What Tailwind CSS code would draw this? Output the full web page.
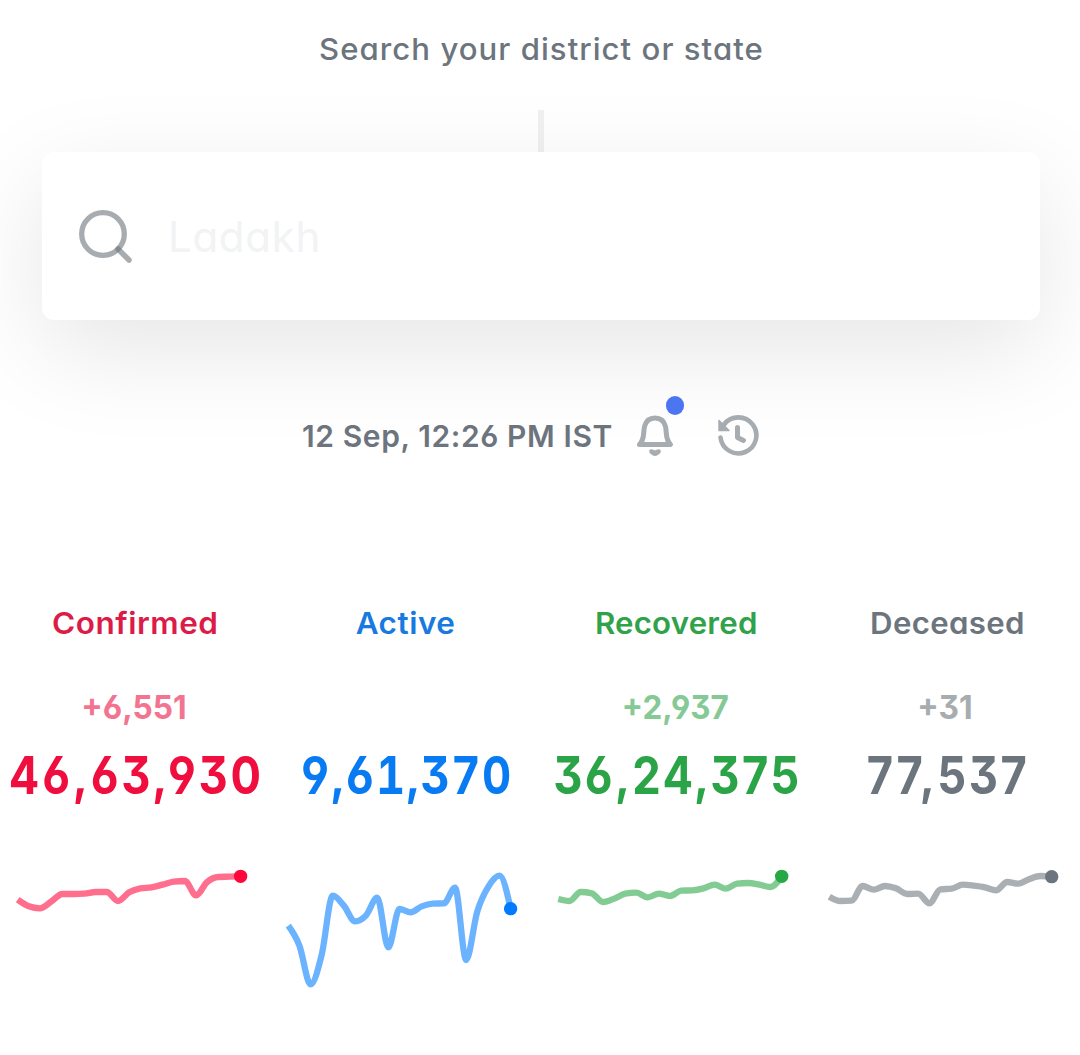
<!DOCTYPE html>
<html lang="en">
<head>
<meta charset="utf-8">
<title>Covid tracker</title>
<script src="https://cdn.jsdelivr.net/npm/@tailwindcss/browser@4"></script>
</head>
<body class="bg-white text-[#6c757d] font-['Inter',sans-serif] overflow-x-hidden [font-feature-settings:'cv11','cv09','cv03','cv04']">
<main class="w-[1080px] h-[1055px] flex flex-col items-center overflow-hidden">
  <label class="mt-[27px] h-11 leading-11 pl-[3px] text-[30px] font-medium tracking-[1px] scale-x-[1.037] whitespace-nowrap">Search your district or state</label>
  <div class="mt-[39px] ml-[2px] w-[6px] h-[42px] bg-[#f1f1f1]"></div>
  <div class="w-[998px] h-[168px] ml-[2px] rounded-xl bg-white shadow-[0_30px_100px_rgba(0,0,0,0.1)] flex items-center pl-[36px]">
    <svg class="w-[56px] h-[56px]" viewBox="0 0 56 56" fill="none" stroke="#6c757d" stroke-opacity=".6" stroke-linecap="round">
      <circle cx="25" cy="26" r="21.3" stroke-width="5.300"/>
      <path d="M40 41L51 52" stroke-width="5.500"/>
    </svg>
    <span class="ml-[34px] pt-[2px] text-[42px] leading-none tracking-[0.7px] text-[#f1f3f4]">Ladakh</span>
  </div>
  <div class="mt-[74px] h-[84px] w-full flex items-center pl-[302px]">
    <span class="w-[310px] pt-px text-[30px] font-semibold tracking-[0.6px] whitespace-nowrap">12 Sep, 12:26 PM IST</span>
    <div class="relative ml-[24px] w-[40px] h-[42px]">
      <svg class="w-[40px] h-[42px]" viewBox="0 0 40 42" fill="none" stroke="#a7acb1" stroke-width="5" stroke-linejoin="round" stroke-linecap="round">
        <path d="M3.500 29.500C9 24 7 18 8.500 11.500C10 5.500 14 3 19 3C24 3 28 5.500 29.500 11.500C31 18 29 24 34.500 29.500Z"/>
        <path d="M14.500 35.500C15.500 34.500 17 36 19 36.500C21 36 22.500 34.500 23.500 35.500C25 37 21 40 19 40C17 40 13 37 14.500 35.500Z" fill="#a7acb1" stroke-width="2"/>
      </svg>
      <i class="absolute left-[30px] -top-[19px] w-[18px] h-[19px] rounded-full bg-[#4c75f2]"></i>
    </div>
    <svg class="ml-[41px] w-[44px] h-[42px]" viewBox="0 0 44 42" fill="none" stroke="#a7acb1" stroke-width="4.600" stroke-linecap="round" stroke-linejoin="round">
      <path d="M3.500 22.500A18 18 0 1 0 7 9.500"/>
      <path d="M2 5.500V15.500H12Z" fill="#a7acb1" stroke-width="1.500"/>
      <path d="M20.500 12.500V22.500L26.500 25.500" stroke-width="5"/>
    </svg>
  </div>
  <section class="mt-[111px] w-full grid grid-cols-4 text-center whitespace-nowrap">
    <article class="flex flex-col items-center text-[#ff073a]">
      <h5 class="h-[68px] leading-[68px] text-[30px] font-semibold scale-x-[1.05] tracking-[0.5px] text-[#dc1c48]">Confirmed</h5>
      <h4 class="mt-[16px] h-[68px] leading-[68px] pr-[2px] text-[33px] font-bold scale-x-[0.96] text-[#f37490]">+6,551</h4>
      <h1 class="mt-px h-[68px] leading-[68px] text-[52px] font-bold scale-x-[0.87] tracking-[3.2px] pl-[4px] text-[#ef0e3e]">46,63,930</h1>
      <svg class="spark mt-[50px] w-[270px] h-[140px]" data-x="17.700 240.600" data-y="119 139 145 125 102 102 101 96 96 123 97 85 82 74 65 63 106 66 51 50 49"></svg>
    </article>
    <article class="flex flex-col items-center text-[#007bff]">
      <h5 class="h-[68px] leading-[68px] text-[30px] font-semibold scale-x-[1.05] tracking-[0.5px] pl-[1px] text-[#187ae0]">Active</h5>
      <h4 class="mt-[16px] h-[68px] leading-[68px] text-[33px] font-bold">&nbsp;</h4>
      <h1 class="mt-px h-[68px] leading-[68px] text-[52px] font-bold scale-x-[0.87] tracking-[1.8px] pl-[4px] tabular-nums text-[#087bf2]">9,61,370</h1>
      <svg class="spark mt-[50px] w-[270px] h-[140px]" data-x="18.300 240.600" data-y="197 257 373 285 107 137 184 166 113 262 147 157 139 131 130 83 300 155 80 47 146"></svg>
    </article>
    <article class="flex flex-col items-center text-[#28a745]">
      <h5 class="h-[68px] leading-[68px] text-[30px] font-semibold scale-x-[1.04] tracking-[0.2px] pl-[2px] text-[#2fa24a]">Recovered</h5>
      <h4 class="mt-[16px] h-[68px] leading-[68px] text-[33px] font-bold scale-x-[0.95] text-[#85c995]">+2,937</h4>
      <h1 class="mt-px h-[68px] leading-[68px] text-[52px] font-bold scale-x-[0.87] tracking-[2.7px] pl-[6px] text-[#2ba447]">36,24,375</h1>
      <svg class="spark mt-[50px] w-[270px] h-[140px]" data-x="18.300 241.700" data-y="117 123 96 100 126 116 101 98 112 101 108 92 91 85 74 86 71 69 74 81 49"></svg>
    </article>
    <article class="flex flex-col items-center text-[#6c757d]">
      <h5 class="h-[68px] leading-[68px] text-[30px] font-semibold scale-x-[1.04] tracking-[0.3px] pl-[4px]">Deceased</h5>
      <h4 class="mt-[16px] h-[68px] leading-[68px] text-[33px] font-bold scale-x-[0.96] text-[#a7acb1]">+31</h4>
      <h1 class="mt-px h-[68px] leading-[68px] text-[52px] font-bold scale-x-[0.87] tracking-[3px] pl-[7px]">77,537</h1>
      <svg class="spark mt-[50px] w-[270px] h-[140px]" data-x="19.300 241.700" data-y="110 123 122 78 89 78 85 102 101 130 88 86 74 77 82 91 66 71 57 48 50"></svg>
    </article>
  </section>
</main>
<script>
// Monotone cubic interpolation through evenly spaced daily values
document.querySelectorAll('.spark').forEach(function (svg) {
  var xr = svg.dataset.x.split(' ').map(Number);
  var y = svg.dataset.y.split(' ').map(function (v) { return v / 3; });
  var n = y.length, h = (xr[1] - xr[0]) / (n - 1), s = [], m = [], i;
  for (i = 0; i < n - 1; i++) s.push((y[i + 1] - y[i]) / h);
  for (i = 1; i < n - 1; i++) {
    m[i] = (Math.sign(s[i - 1]) + Math.sign(s[i])) * Math.min(Math.abs(s[i - 1]), Math.abs(s[i]), Math.abs(s[i - 1] + s[i]) / 4);
  }
  m[0] = (3 * s[0] - m[1]) / 2;
  m[n - 1] = (3 * s[n - 2] - m[n - 2]) / 2;
  var d = 'M' + xr[0] + ',' + y[0];
  for (i = 1; i < n; i++) {
    var x0 = xr[0] + h * (i - 1), x1 = x0 + h;
    d += 'C' + [x0 + h / 3, y[i - 1] + m[i - 1] * h / 3, x1 - h / 3, y[i] - m[i] * h / 3, x1, y[i]].join(',');
  }
  svg.innerHTML = '<path d="' + d + '" fill="none" stroke="currentColor" stroke-opacity=".58" stroke-width="6.300"/>' +
    '<circle cx="' + xr[1] + '" cy="' + y[n - 1] + '" r="6.700" fill="currentColor"/>';
});
</script>
</body>
</html>
